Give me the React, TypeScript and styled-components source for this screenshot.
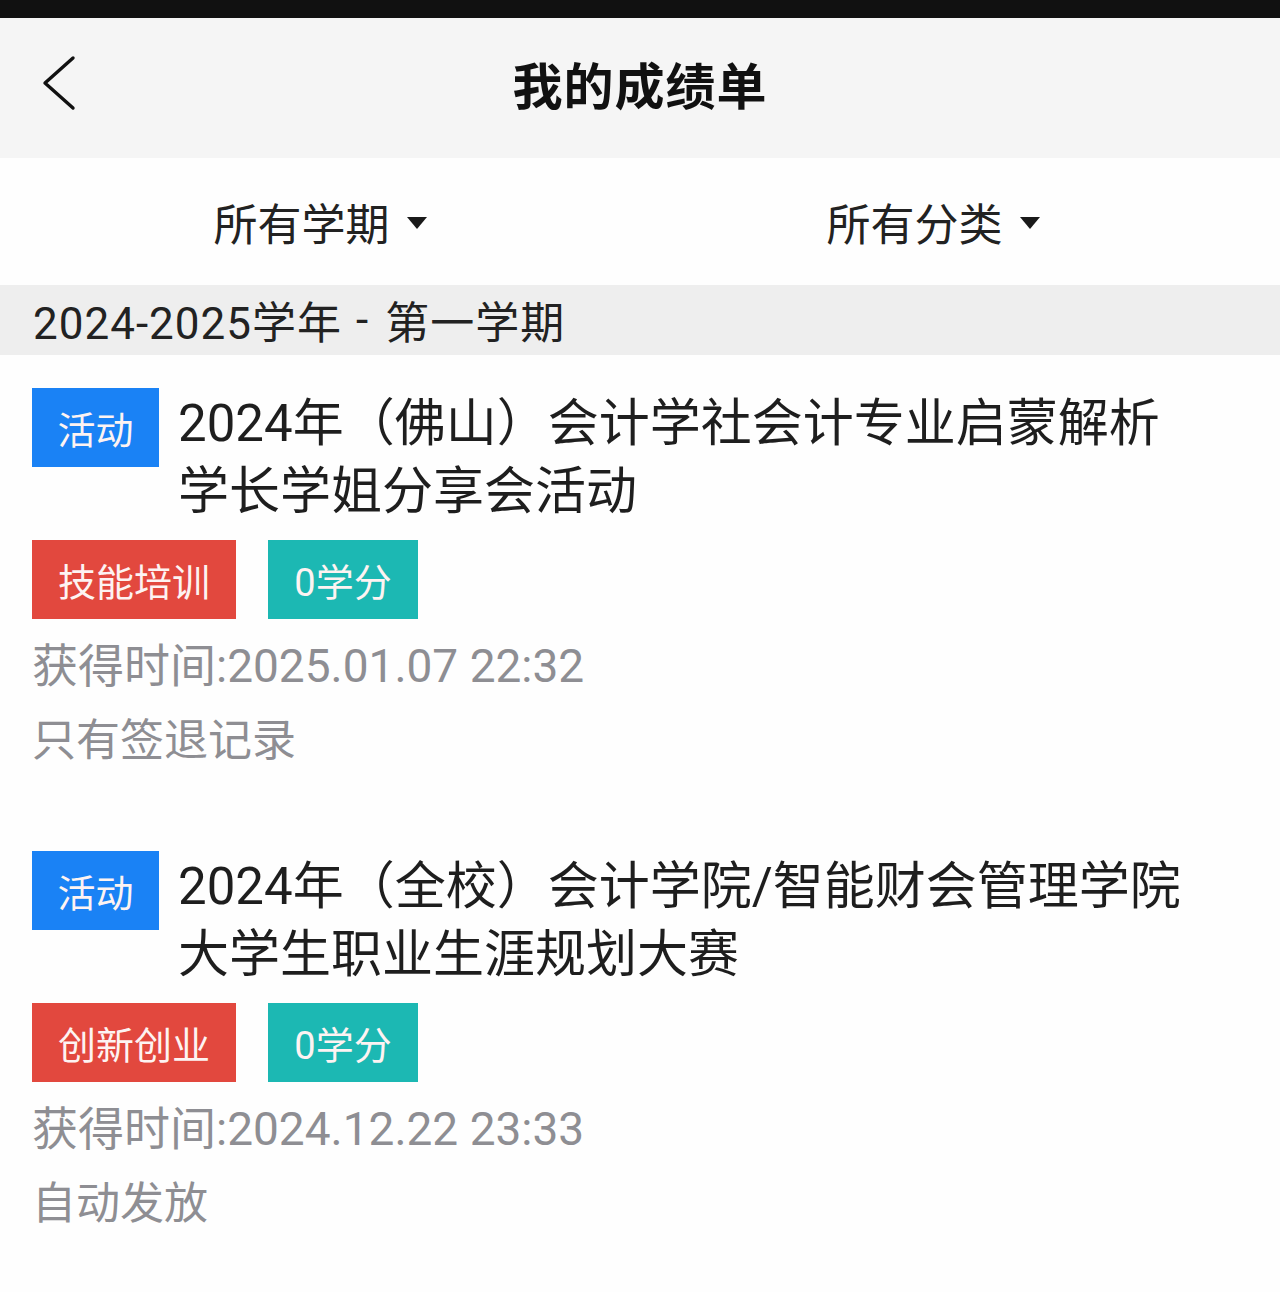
import React from "react";
import styled, { createGlobalStyle } from "styled-components";

const GlobalStyle = createGlobalStyle`
  html, body {
    margin: 0;
    padding: 0;
    background: #fefefe;
  }
  body {
    font-family: Roboto, "Noto Sans CJK SC", "Noto Sans", sans-serif;
    color: #222;
  }
`;

const Page = styled.div`
  width: 1280px;
  min-height: 1292px;
  background: #fefefe;
  display: flex;
  flex-direction: column;
`;

const StatusBar = styled.div`
  height: 18px;
  background: #111;
`;

const NavBar = styled.header`
  box-sizing: border-box;
  height: 140px;
  padding-bottom: 10px;
  background: #f5f5f5;
  display: grid;
  grid-template-columns: 120px 1fr 120px;
  align-items: center;
`;

const BackButton = styled.button`
  border: none;
  background: transparent;
  padding: 0 0 0 42px;
  display: flex;
  align-items: center;
  cursor: pointer;
`;

const NavTitle = styled.h1`
  margin: 0;
  text-align: center;
  font-size: 50px;
  font-weight: 700;
  color: #111;
  letter-spacing: 1px;
`;

const FilterBar = styled.div`
  height: 127px;
  background: #fefefe;
  display: grid;
  grid-template-columns: 1fr 1fr;
  align-items: center;
`;

const FilterItem = styled.div<{ $shift?: number }>`
  display: flex;
  justify-content: center;
  align-items: center;
  gap: 17px;
  padding-right: ${(p) => p.$shift || 0}px;
  font-size: 44px;
  color: #222;
`;

const Caret = styled.span`
  width: 0;
  height: 0;
  border-left: 10px solid transparent;
  border-right: 10px solid transparent;
  border-top: 12px solid #1a1a1a;
  margin-top: 2px;
`;

const TermHeader = styled.div`
  height: 70px;
  background: #eeeeee;
  display: flex;
  align-items: center;
  padding-left: 33px;
  font-size: 44px;
  letter-spacing: 1px;
  color: #222;
`;

const Separator = styled.span`
  margin: 0 16px 0 14px;
`;

const Record = styled.div`
  padding: 33px 85px 39px 32px;
`;

const TitleRow = styled.div`
  display: flex;
  align-items: flex-start;
`;

const Tag = styled.span<{ $bg: string; $w: number }>`
  flex: none;
  width: ${(p) => p.$w}px;
  height: 79px;
  background: ${(p) => p.$bg};
  color: #fdf3f2;
  font-size: 38px;
  display: flex;
  align-items: center;
  justify-content: center;
`;

const Title = styled.div`
  margin-left: 19px;
  padding-top: 2px;
  font-size: 51px;
  line-height: 68px;
  color: #1e1e1e;
`;

const TagRow = styled.div`
  display: flex;
  gap: 32px;
  margin-top: 14px;
`;

const MetaLines = styled.div`
  margin-top: 10px;
  line-height: 75px;
  color: #8e8e93;
`;

const TimeLine = styled.div`
  font-size: 46px;
`;

const NoteLine = styled.div`
  font-size: 44px;
`;

const BLUE = "#1a82f5";
const RED = "#e2483e";
const TEAL = "#1cb8b3";

interface RecordData {
  title: string;
  category: string;
  credit: string;
  time: string;
  note: string;
}

const records: RecordData[] = [
  {
    title: "2024年（佛山）会计学社会计专业启蒙解析学长学姐分享会活动",
    category: "技能培训",
    credit: "0学分",
    time: "获得时间:2025.01.07 22:32",
    note: "只有签退记录",
  },
  {
    title: "2024年（全校）会计学院/智能财会管理学院大学生职业生涯规划大赛",
    category: "创新创业",
    credit: "0学分",
    time: "获得时间:2024.12.22 23:33",
    note: "自动发放",
  },
];

const ChevronLeft = () => (
  <svg width="34" height="56" viewBox="0 0 34 56" fill="none">
    <polyline
      points="31,3 3,28 31,53"
      stroke="#111"
      strokeWidth="3.4"
      strokeLinecap="round"
      strokeLinejoin="round"
    />
  </svg>
);

const App = () => {
  return (
    <Page>
      <GlobalStyle />
      <StatusBar />
      <NavBar>
        <BackButton aria-label="返回">
          <ChevronLeft />
        </BackButton>
        <NavTitle>我的成绩单</NavTitle>
        <div />
      </NavBar>
      <FilterBar>
        <FilterItem>
          所有学期
          <Caret />
        </FilterItem>
        <FilterItem $shift={54}>
          所有分类
          <Caret />
        </FilterItem>
      </FilterBar>
      <TermHeader>
        2024-2025学年<Separator>-</Separator>第一学期
      </TermHeader>
      {records.map((r) => (
        <Record key={r.title}>
          <TitleRow>
            <Tag $bg={BLUE} $w={127}>
              活动
            </Tag>
            <Title>{r.title}</Title>
          </TitleRow>
          <TagRow>
            <Tag $bg={RED} $w={204}>
              {r.category}
            </Tag>
            <Tag $bg={TEAL} $w={150}>
              {r.credit}
            </Tag>
          </TagRow>
          <MetaLines>
            <TimeLine>{r.time}</TimeLine>
            <NoteLine>{r.note}</NoteLine>
          </MetaLines>
        </Record>
      ))}
    </Page>
  );
};

export default App;
